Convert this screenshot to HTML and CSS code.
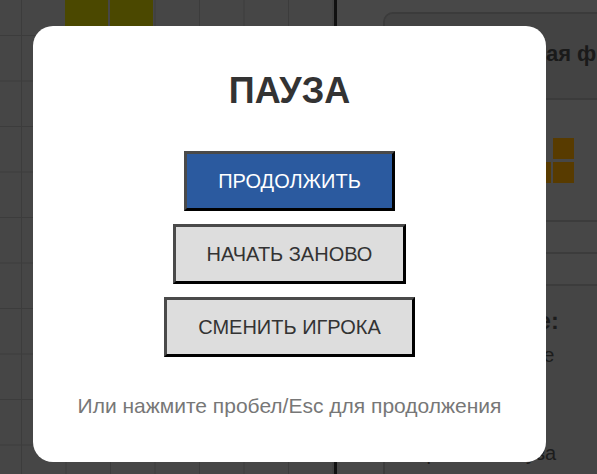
FILE: index.html
```html
<!DOCTYPE html>
<html lang="ru">
<head>
<meta charset="utf-8">
<title>Тетрис — пауза</title>
<link rel="stylesheet" href="styles.css">
</head>
<body>
<div class="game">
  <div class="board">
    <div class="cell cell-yellow cell-a"></div>
    <div class="cell cell-yellow cell-b"></div>
  </div>
  <aside class="side">
    <div class="card">
      <h2 class="card-title">Следующая фигура</h2>
      <div class="preview">
        <div class="piece">
          <span class="pc pc-empty"></span><span class="pc pc-empty"></span><span class="pc"></span>
          <span class="pc"></span><span class="pc"></span><span class="pc"></span>
        </div>
      </div>
      <div class="stat"></div>
      <div class="stat"></div>
      <div class="controls">
        <p class="controls-title">Управление:</p>
        <p class="controls-line">← → движение</p>
        <p class="controls-line">↑ поворот</p>
        <p class="controls-line">↓ вниз</p>
        <p class="controls-line">Пробел – пауза</p>
      </div>
    </div>
  </aside>
</div>

<div class="overlay">
  <div class="modal">
    <h1 class="modal-title">ПАУЗА</h1>
    <div class="actions">
      <button class="btn btn-primary">ПРОДОЛЖИТЬ</button>
      <button class="btn">НАЧАТЬ ЗАНОВО</button>
      <button class="btn">СМЕНИТЬ ИГРОКА</button>
    </div>
    <p class="hint">Или нажмите пробел/Esc для продолжения</p>
  </div>
</div>
</body>
</html>
```
FILE: styles.css
```css
* { box-sizing: border-box; }

html, body {
  margin: 0;
  height: 100%;
}

body {
  font-family: "Liberation Sans", Arial, sans-serif;
  background: #484848;
  overflow: hidden;
}

.game {
  display: flex;
  height: 474px;
}

.board {
  position: relative;
  width: 337px;
  flex: none;
  border-right: 3px solid #111;
  background-color: #464646;
  background-image:
    linear-gradient(to right, #3c3c3c 1px, transparent 1px),
    linear-gradient(to bottom, #3c3c3c 1px, transparent 1px);
  background-size: 44.5px 45.5px;
  background-position: 21px 35px;
}

.cell {
  position: absolute;
  width: 43px;
  height: 44px;
  top: -10px;
}

.cell-yellow { background: #4b4800; }
.cell-a { left: 65px; }
.cell-b { left: 110px; }

.side {
  flex: 1;
  padding: 12px 0 0 46px;
  background: #484848;
  overflow: hidden;
}

.card {
  width: 400px;
  height: 480px;
  border: 2px solid #3b3b3b;
  border-radius: 10px;
  background: #454545;
  overflow: hidden;
}

.card-title {
  margin: 0;
  height: 86px;
  padding: 27px 0 0 55px;
  font-size: 22px;
  font-weight: bold;
  color: #1a1a1a;
  white-space: nowrap;
  border-bottom: 2px solid #3b3b3b;
  background: #434343;
}

.preview {
  height: 122px;
  padding: 38px 0 0 122px;
  background: #474747;
  border-bottom: 2px solid #3c3c3c;
}

.piece {
  display: grid;
  grid-template-columns: repeat(3, 21px);
  grid-auto-rows: 21px;
  gap: 3px 2px;
}

.pc { background: #583b00; }
.pc-empty { background: transparent; }

.stat {
  height: 32px;
  border-bottom: 2px solid #3c3c3c;
  background: #474747;
}

.controls {
  padding: 22px 0 0 27px;
  color: #1c1c1c;
  font-size: 20px;
  white-space: nowrap;
}

.controls p { margin: 0; }

.controls-title {
  font-size: 23.5px;
  font-weight: bold;
  margin-bottom: 4px !important;
}

.controls-line {
  line-height: 32.5px;
}

/* Pause overlay */
.overlay {
  position: fixed;
  inset: 0;
  padding: 26px 0 0 33px;
}

.modal {
  width: 513px;
  height: 436px;
  padding: 44px 20px 0;
  background: #fff;
  border-radius: 20px;
  display: flex;
  flex-direction: column;
  align-items: center;
}

.modal-title {
  margin: 0;
  font-size: 36px;
  font-weight: bold;
  color: #333;
}

.actions {
  margin-top: 39px;
  display: flex;
  flex-direction: column;
  align-items: center;
  gap: 13px;
}

.btn {
  font-family: "Liberation Sans", Arial, sans-serif;
  font-size: 20px;
  line-height: 24px;
  padding: 15px 31px;
  border: 3px solid;
  border-color: #4a4a4a #000 #000 #4a4a4a;
  background: #ddd;
  color: #333;
  cursor: pointer;
}

.btn-primary {
  background: #2b5a9f;
  color: #fff;
}

.hint {
  margin: 37px 0 0;
  font-size: 21px;
  line-height: 24px;
  color: #777;
}
```
